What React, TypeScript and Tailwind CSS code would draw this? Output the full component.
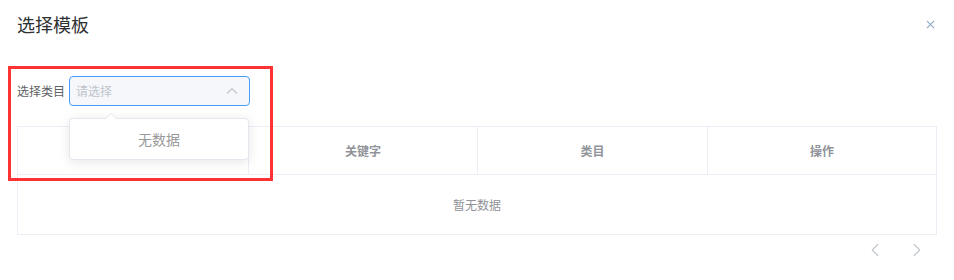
import { ChevronLeft, ChevronRight } from "lucide-react";

const COLUMNS = ["", "关键字", "类目", "操作"];

export default function App() {
  return (
    <div className="relative w-[954px] h-[280px] bg-white font-['Noto_Sans_CJK_SC','Noto_Sans',sans-serif] overflow-hidden">
      {/* Header */}
      <div className="flex items-center justify-between pl-[17px] pr-[18px] pt-[12px]">
        <span className="text-[18px] leading-[24px] text-[#303133]">选择模板</span>
        <button className="w-[12px] h-[12px] flex items-center justify-center text-[#909399]">
          <svg viewBox="0 0 10 10" className="w-[9px] h-[9px]" stroke="#8fa8c8" strokeWidth="1.2" fill="none">
            <path d="M1 1L9 9M9 1L1 9" />
          </svg>
        </button>
      </div>

      {/* Filter row */}
      <div className="flex items-center pl-[17px] mt-[40px]">
        <label className="w-[52px] text-[12px] leading-[30px] text-[#606266]">选择类目</label>
        <div className="relative">
          <div className="w-[181px] h-[30px] rounded-[4px] border border-[#409eff] bg-[#f5f7fa] flex items-center justify-between pl-[6px] pr-[11px]">
            <span className="text-[12px] text-[#c0c4cc]">请选择</span>
            <svg viewBox="0 0 12 6" className="w-[12px] h-[6px]" fill="none" stroke="#c0c4cc" strokeWidth="1.2">
              <path d="M1 5.5L6 0.8L11 5.5" />
            </svg>
          </div>

          {/* Dropdown popper */}
          <div className="absolute left-0 top-[42px] z-20 w-[180px] h-[42px] rounded-[4px] border border-[#e4e7ed] bg-white shadow-[0_2px_12px_0_rgba(0,0,0,0.1)] flex items-center justify-center">
            <span className="text-[14px] text-[#999999]">无数据</span>
            <div className="absolute -top-[6px] left-[35px] w-0 h-0 border-x-[6px] border-x-transparent border-b-[6px] border-b-[#e4e7ed]" />
            <div className="absolute -top-[5px] left-[36px] w-0 h-0 border-x-[5px] border-x-transparent border-b-[5px] border-b-white" />
          </div>
        </div>
      </div>

      {/* Table */}
      <div className="mx-[17px] mt-[20px] border border-[#ebeef5]">
        <div className="grid grid-cols-[231px_229px_230px_1fr] h-[48px] border-b border-[#ebeef5]">
          {COLUMNS.map((col, i) => (
            <div
              key={i}
              className={`flex items-center justify-center text-[12px] font-bold text-[#909399] ${
                i < COLUMNS.length - 1 ? "border-r border-[#ebeef5]" : ""
              }`}
            >
              {col}
            </div>
          ))}
        </div>
        <div className="h-[59px] flex items-center justify-center text-[12px] text-[#909399]">暂无数据</div>
      </div>

      {/* Pagination */}
      <div className="flex justify-end gap-[20px] pr-[26px] mt-[4px]">
        <ChevronLeft className="w-[22px] h-[22px] text-[#c0c4cc]" strokeWidth={1.2} />
        <ChevronRight className="w-[22px] h-[22px] text-[#c0c4cc]" strokeWidth={1.2} />
      </div>

      {/* Highlight annotation */}
      <div className="pointer-events-none absolute left-[8px] top-[66px] w-[265px] h-[115px] border-[3px] border-[#ff3333]" />
    </div>
  );
}
